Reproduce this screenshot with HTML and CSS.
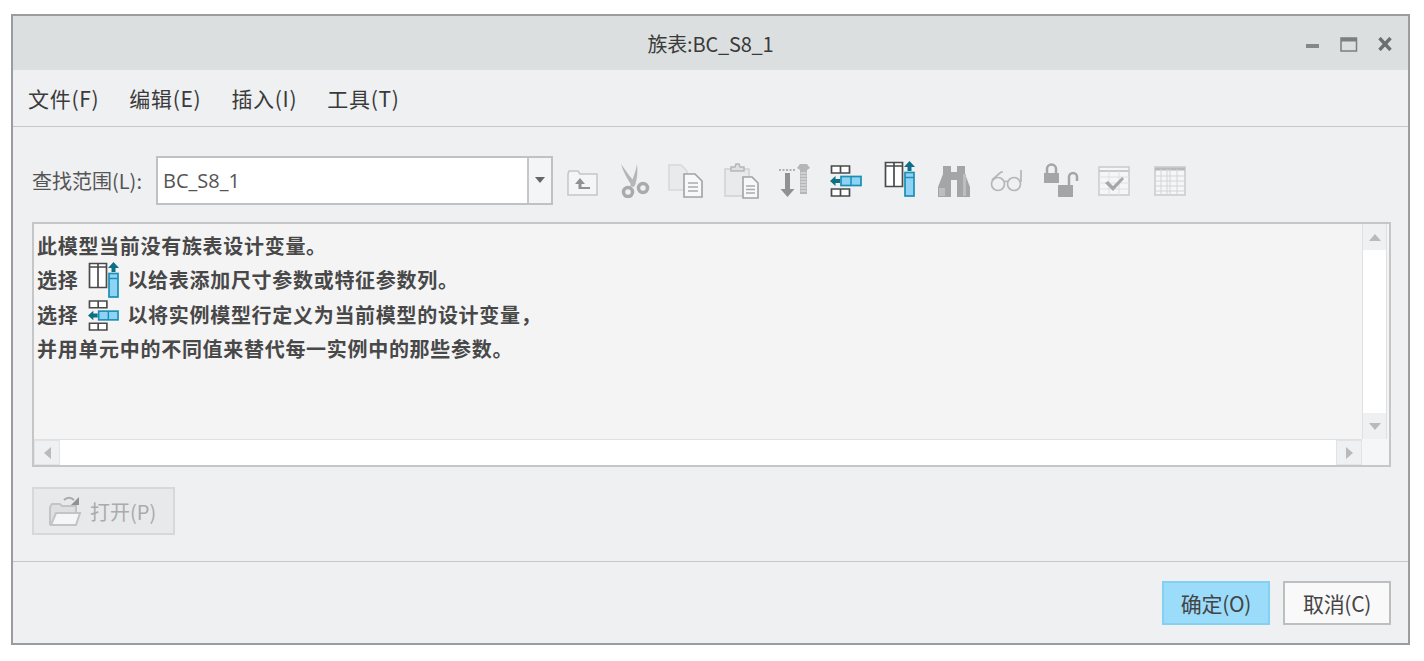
FILE: index.html
```html
<!DOCTYPE html>
<html lang="zh">
<head>
<meta charset="utf-8">
<title>族表:BC_S8_1</title>
<link rel="stylesheet" href="styles.css">
</head>
<body>
<svg class="defs" width="0" height="0" aria-hidden="true">
  <defs>
    <symbol id="add-col" viewBox="0 0 31 36">
      <path d="M1.500 1.500h17v24h-17zM10 1.500v24M1.500 5h17" fill="#fff" stroke="#4a4a4a" stroke-width="1.700"/>
      <path d="M25.500 0l-5.500 6h3.500v4h4V6H31z" fill="#0d6f86"/>
      <rect x="21" y="11.500" width="9" height="23.500" fill="#8fd3f4" stroke="#1b8fb5" stroke-width="1.700"/>
      <path d="M21 16.500h9" stroke="#1b8fb5" stroke-width="1.500"/>
    </symbol>
    <symbol id="add-row" viewBox="0 0 32 32">
      <path d="M1.500 1h18v7h-18zM10.500 1v7M1.500 24h18v7h-18zM10.500 24v7" fill="#fff" stroke="#4a4a4a" stroke-width="1.700"/>
      <path d="M0 16l5.500-5v3H10v4H5.500v3z" fill="#0d6f86"/>
      <rect x="11" y="11.500" width="20" height="9" fill="#8fd3f4" stroke="#1b8fb5" stroke-width="1.700"/>
      <path d="M21 11.500v9" stroke="#1b8fb5" stroke-width="1.500"/>
    </symbol>
  </defs>
</svg>
<main class="window">
  <header class="titlebar">
    <h1 class="title">族表:BC_S8_1</h1>
    <div class="winctl">
      <svg width="14" height="14" viewBox="0 0 14 14"><rect x="0" y="7" width="13" height="4" fill="#85878a"/></svg>
      <svg width="18" height="15" viewBox="0 0 18 15"><rect x="1" y="1" width="15.500" height="13" fill="none" stroke="#7c7e80" stroke-width="1.500"/><rect x="1" y="1" width="15.500" height="3.500" fill="#7c7e80"/></svg>
      <svg width="14" height="14" viewBox="0 0 14 14"><path d="M1.500 1l11 12M12.500 1l-11 12" stroke="#6c6e70" stroke-width="3.400"/></svg>
    </div>
  </header>
  <nav class="menubar">
    <span class="menu">文件(F)</span>
    <span class="menu">编辑(E)</span>
    <span class="menu">插入(I)</span>
    <span class="menu">工具(T)</span>
  </nav>
  <section class="content">
    <div class="lookrow">
      <label class="looklabel">查找范围(L):</label>
      <div class="combo">
        <span class="combotext">BC_S8_1</span>
        <span class="comboarrow"><svg width="12" height="7" viewBox="0 0 12 7"><path d="M1 0h10L6 6z" fill="#666"/></svg></span>
      </div>
      <div class="tools">
        <svg class="tool t-up" width="34" height="30" viewBox="0 0 34 30"><path d="M2 7l1-3h9l2 3h17v21H2z" fill="#f4f5f6" stroke="#c4c6c8" stroke-width="1.500"/><path d="M14 11l-5 6h3.500v5H24v-2h-8.500v-3H19z" fill="#8f9193"/></svg>
        <svg class="tool t-cut" width="30" height="34" viewBox="0 0 30 34"><path d="M1 0c2 7 6 15 11 22l4-2C11 14 6 7 1 0zM17 0c-1 7-4 14-7 22l4 1c3-6 4-14 3-23z" fill="#b4b6b8"/><circle cx="8" cy="28" r="4.500" fill="none" stroke="#a8aaac" stroke-width="3.500"/><circle cx="23" cy="24" r="4.500" fill="none" stroke="#a8aaac" stroke-width="3.500"/></svg>
        <svg class="tool t-copy" width="36" height="34" viewBox="0 0 36 34"><path d="M1 1h12l6 6v19H1z" fill="#e9eaeb" stroke="#d6d8da" stroke-width="1.500"/><path d="M16 10h11l7 7v16H16z" fill="#f8f8f8" stroke="#a0a2a4" stroke-width="1.600"/><path d="M20 19h10M20 23h10M20 27h10" stroke="#a8aaac" stroke-width="1.500"/></svg>
        <svg class="tool t-paste" width="36" height="36" viewBox="0 0 36 36"><path d="M1 6h24v27H1z" fill="#e9eaeb" stroke="#cfd1d3" stroke-width="1.500"/><path d="M7 7V4h4l1-3h3l1 3h4v4H7z" fill="#dfe0e1" stroke="#b4b6b8" stroke-width="1.500"/><path d="M19 14h9l6 6v15H19z" fill="#f8f8f8" stroke="#a0a2a4" stroke-width="1.600"/><path d="M22 23h9M22 26.500h9M22 30h9" stroke="#a8aaac" stroke-width="1.500"/></svg>
        <svg class="tool t-screw" width="32" height="36" viewBox="0 0 32 36"><path d="M0 7h17" stroke="#9a9c9e" stroke-width="1.500" stroke-dasharray="2 1.500"/><path d="M6 10h5v16h4.500L8.500 34 1.500 26H6z" fill="#8f9193"/><path d="M21 1h7l3 4-3 2v24h-7V7l-3-2z" fill="#b4b6b8"/><path d="M21.500 10h6M21.500 13h6M21.500 16h6M21.500 19h6M21.500 22h6M21.500 25h6M21.500 28h6" stroke="#e8e9ea" stroke-width="1.200"/></svg>
        <svg class="tool t-row" width="32" height="32"><use href="#add-row"/></svg>
        <svg class="tool t-col" width="31" height="36"><use href="#add-col"/></svg>
        <svg class="tool t-bino" width="36" height="34" viewBox="0 0 36 34"><path d="M7 2h8v6h6V2h8v8l5 13v10H21V16h-6v17H2V23l5-13z" fill="#a3a5a7"/><path d="M3 24h6v8H3zM27 10h3v22h-3z" fill="#bcbec0"/></svg>
        <svg class="tool t-glass" width="34" height="26" viewBox="0 0 34 26"><circle cx="9" cy="16" r="6.500" fill="none" stroke="#b4b6b8" stroke-width="1.700"/><circle cx="25" cy="16" r="6.500" fill="none" stroke="#b4b6b8" stroke-width="1.700"/><path d="M15 14c1-1 3-1 4 0M3 12l9-8h2M32 14V2" fill="none" stroke="#b4b6b8" stroke-width="1.700"/></svg>
        <svg class="tool t-lock" width="36" height="36" viewBox="0 0 36 36"><rect x="1" y="10" width="15" height="10" fill="#a3a5a7"/><path d="M4 10V6a4.500 4.500 0 0 1 9 0v4" fill="none" stroke="#a3a5a7" stroke-width="2.500"/><rect x="15" y="22" width="15" height="12" fill="#a3a5a7"/><path d="M26 22v-8a4 4 0 0 1 8 0v4" fill="none" stroke="#a3a5a7" stroke-width="2.500"/></svg>
        <svg class="tool t-check" width="32" height="30" viewBox="0 0 32 30"><rect x="1" y="1" width="30" height="28" fill="#f5f6f6" stroke="#c8cacc" stroke-width="1.500"/><path d="M1 5h30" stroke="#c8cacc" stroke-width="2"/><path d="M1 11h30M1 17h30M1 23h30M11 5v24M21 5v24" stroke="#dfe0e1"/><path d="M7 17l3-2 5 5 9-9 2 2-11 12z" fill="#a5a7a9"/></svg>
        <svg class="tool t-table" width="32" height="30" viewBox="0 0 32 30"><rect x="1" y="1" width="30" height="28" fill="#f5f6f6" stroke="#c8cacc" stroke-width="1.500"/><path d="M1 3h30" stroke="#b8babc" stroke-width="3"/><path d="M1 10h30M1 15h30M1 20h30M1 25h30M7 3v26M13 3v26M16 3v26M23 3v26" stroke="#d2d4d6"/></svg>
      </div>
    </div>
    <div class="msgpanel">
      <div class="msgarea">
        <p class="line">此模型当前没有族表设计变量。</p>
        <p class="line">选择<svg class="inline i-col"><use href="#add-col"/></svg>以给表添加尺寸参数或特征参数列。</p>
        <p class="line">选择<svg class="inline i-row"><use href="#add-row"/></svg>以将实例模型行定义为当前模型的设计变量，</p>
        <p class="line">并用单元中的不同值来替代每一实例中的那些参数。</p>
      </div>
      <div class="vscroll">
        <span class="sbtn"><svg width="12" height="7" viewBox="0 0 12 7"><path d="M6 0l6 7H0z" fill="#b8babc"/></svg></span>
        <span class="strack"></span>
        <span class="sbtn"><svg width="12" height="7" viewBox="0 0 12 7"><path d="M0 0h12L6 7z" fill="#b8babc"/></svg></span>
      </div>
      <div class="hscroll">
        <span class="hbtn"><svg width="7" height="12" viewBox="0 0 7 12"><path d="M7 0v12L0 6z" fill="#b8babc"/></svg></span>
        <span class="htrack"></span>
        <span class="hbtn"><svg width="7" height="12" viewBox="0 0 7 12"><path d="M0 0v12l7-6z" fill="#b8babc"/></svg></span>
      </div>
      <div class="corner"></div>
    </div>
    <div class="openrow">
      <button class="openbtn" type="button" disabled>
        <svg width="34" height="34" viewBox="0 0 34 34"><path d="M2 31V13l2-3h8l2 2h14v6" fill="#dedfe0" stroke="#c2c4c6" stroke-width="2"/><path d="M3 31l5-12h24l-4 12z" fill="#f5f6f6" stroke="#c2c4c6" stroke-width="2"/><path d="M16 6c3-3 7-3 10 0" fill="none" stroke="#a8aaac" stroke-width="2"/><path d="M31 3v8h-8z" fill="#8f9193"/></svg>
        <span>打开(P)</span>
      </button>
    </div>
  </section>
  <footer class="footer">
    <button class="btn primary" type="button">确定(O)</button>
    <button class="btn" type="button">取消(C)</button>
  </footer>
</main>
</body>
</html>
```

FILE: styles.css
```css
* { box-sizing: border-box; }
html, body { height: 100%; }
body {
  margin: 0;
  background: #fff;
  font-family: "Noto Sans CJK SC", "Open Sans", sans-serif;
  color: #3c3c3c;
  overflow: hidden;
}
.defs { position: absolute; }
.window {
  width: 1399px;
  height: 631px;
  margin: 14px 0 0 11px;
  border: 2px solid #9a9c9e;
  background: #eff0f2;
  display: flex;
  flex-direction: column;
}
.titlebar {
  flex: 0 0 54px;
  background: #dcdfe0;
  position: relative;
  display: flex;
  align-items: center;
  justify-content: center;
}
.title {
  margin: 0;
  font-family: "Noto Sans CJK SC", "Open Sans", sans-serif;
  font-size: 20px;
  font-weight: 400;
  letter-spacing: -0.2px;
  color: #3a3a3a;
}
.winctl {
  position: absolute;
  right: 16px;
  top: 21px;
  display: flex;
  gap: 20px;
  align-items: flex-start;
}
.menubar {
  flex: 0 0 57px;
  display: flex;
  align-items: center;
  gap: 30px;
  padding: 0 0 0 15px;
  border-bottom: 1px solid #c4c6c8;
}
.menu {
  font-size: 21px;
  letter-spacing: 0.7px;
  color: #3a3a3a;
}
.content {
  flex: 0 0 435px;
  padding: 29px 18px 0 19px;
  border-bottom: 1px solid #c4c6c8;
  display: flex;
  flex-direction: column;
}
.lookrow {
  display: flex;
  align-items: center;
  height: 49px;
}
.looklabel {
  flex: 0 0 124px;
  font-size: 20px;
  letter-spacing: 0;
  color: #555;
}
.combo {
  flex: 0 0 397px;
  height: 49px;
  display: flex;
  background: #fff;
  border: 2px solid #bfc1c3;
}
.combotext {
  flex: 1;
  padding-left: 5px;
  font-family: "Open Sans", sans-serif;
  font-size: 20px;
  line-height: 45px;
  color: #555;
}
.comboarrow {
  flex: 0 0 24px;
  background: #f4f5f6;
  border-left: 2px solid #c4c6c8;
  display: flex;
  align-items: center;
  justify-content: center;
}
.tools {
  display: flex;
  align-items: center;
  margin-left: 13px;
}
.tool { flex: none; display: block; }
.t-up { margin-top: 2px; }
.t-cut { margin-left: 20px; }
.t-copy { margin-left: 18px; }
.t-paste { margin-left: 20px; }
.t-screw { margin-left: 19px; }
.t-row { margin-left: 19px; }
.t-col { margin-left: 22px; margin-top: -3px; }
.t-bino { margin-left: 21px; }
.t-glass { margin-left: 17px; }
.t-lock { margin-left: 20px; }
.t-check { margin-left: 19px; }
.t-table { margin-left: 24px; }
.msgpanel {
  margin-top: 17px;
  width: 1359px;
  height: 245px;
  border: 2px solid #c4c6c8;
  background: #f4f4f5;
  display: grid;
  grid-template-columns: 1fr 27px;
  grid-template-rows: 1fr 26px;
}
.msgarea {
  padding: 4px 0 0 3px;
  overflow: hidden;
}
.line {
  margin: 0;
  height: 34.5px;
  display: flex;
  align-items: center;
  font-size: 20px;
  font-weight: 700;
  letter-spacing: 0.7px;
  color: #484848;
  white-space: pre;
}
.inline { flex: none; width: 31px; margin: 0 8px 0 10px; }
.i-col { height: 36px; }
.i-row { height: 31px; margin-top: 3px; }
.vscroll {
  display: flex;
  flex-direction: column;
  width: 25px;
  border-left: 1px solid #dfe0e1;
  border-right: 1px solid #dfe0e1;
}
.sbtn {
  flex: 0 0 26px;
  background: #eff0f1;
  display: flex;
  align-items: center;
  justify-content: center;
}
.strack { flex: 1; background: #fff; }
.hscroll {
  display: flex;
  border-top: 1px solid #dfe0e1;
}
.hbtn {
  flex: 0 0 26px;
  background: #eff0f1;
  border: 1px solid #e2e3e4;
  display: flex;
  align-items: center;
  justify-content: center;
}
.htrack { flex: 1; background: #fff; }
.corner { background: #f4f6f7; }
.openrow { margin-top: 20px; }
.openbtn {
  width: 143px;
  height: 48px;
  padding: 0 0 0 14px;
  background: #e8e9ea;
  border: 2px solid #d6d8d9;
  display: flex;
  align-items: center;
  gap: 8px;
  font-family: inherit;
  font-size: 20px;
  letter-spacing: 0;
  color: #a9abad;
}
.footer {
  flex: 1;
  display: flex;
  justify-content: flex-end;
  align-items: flex-start;
  gap: 13px;
  padding: 19px 17px 0 0;
}
.btn {
  width: 108px;
  height: 44px;
  padding: 0;
  background: #f9f9fa;
  border: 2px solid #bcbec0;
  font-family: inherit;
  font-size: 21px;
  letter-spacing: -0.3px;
  color: #444;
}
.primary {
  background: #9bdcfb;
  border-color: #84d0f3;
}
```
